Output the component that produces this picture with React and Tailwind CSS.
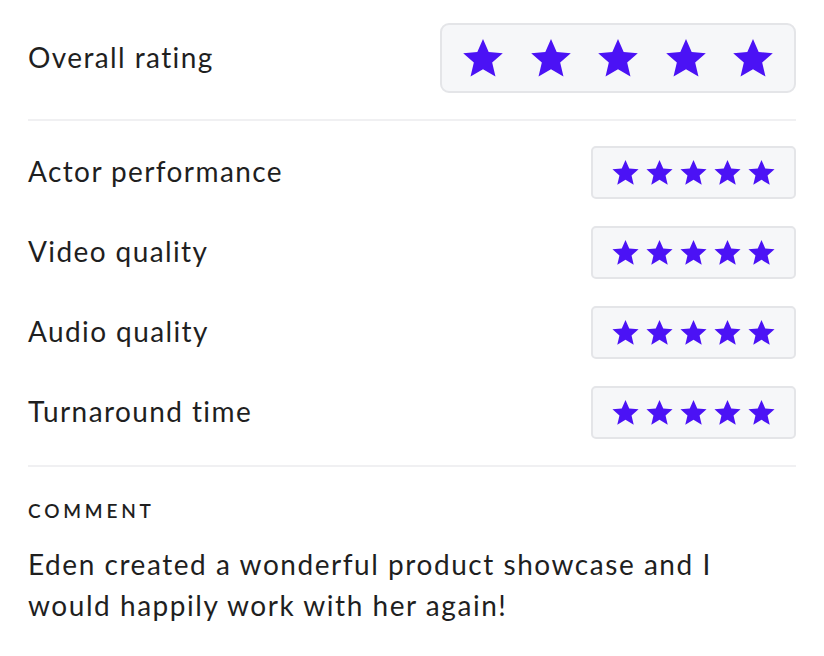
import React from "react";

const STAR = "M12 1.6l3.1 7.1 7.7.7-5.8 5.1 1.8 7.6L12 18.1l-6.8 4 1.8-7.6L1.2 9.4l7.7-.7z";

function Star({ size }) {
  return (
    <svg width={size} height={size} viewBox="0 0 24 24" className="shrink-0">
      <path d={STAR} fill="#4b12f5" />
    </svg>
  );
}

function Stars({ big }) {
  if (big) {
    return (
      <div className="flex h-[70px] w-[356px] items-center justify-between rounded-[9px] border-2 border-[#e4e5e8] bg-[#f6f7f9] px-[19px]">
        {[0, 1, 2, 3, 4].map((i) => (
          <Star key={i} size={44} />
        ))}
      </div>
    );
  }
  return (
    <div className="flex h-[53px] w-[205px] items-center justify-center gap-[5px] rounded-[5px] border-2 border-[#e4e5e8] bg-[#f6f7f9]">
      {[0, 1, 2, 3, 4].map((i) => (
        <Star key={i} size={29} />
      ))}
    </div>
  );
}

const categories = ["Actor performance", "Video quality", "Audio quality", "Turnaround time"];

export default function App() {
  return (
    <div
      className="min-h-screen bg-white px-[28px] pt-[23px] text-[#1f1f1f]"
      style={{ fontFamily: "Lato, 'Liberation Sans', sans-serif" }}
    >
      <div className="flex items-center justify-between">
        <span className="-mt-[2px] text-[28px] tracking-[0.05em]">Overall rating</span>
        <Stars big />
      </div>
      <div className="mt-[26px] h-[2px] bg-[#f0f0f2]" />
      <div className="flex flex-col gap-[27px] pt-[25px]">
        {categories.map((c) => (
          <div key={c} className="flex items-center justify-between">
            <span className="-mt-[3px] text-[28px] tracking-[0.05em]">{c}</span>
            <Stars />
          </div>
        ))}
      </div>
      <div className="mt-[26px] h-[2px] bg-[#f0f0f2]" />
      <div className="pt-[34px] text-[19px] font-semibold uppercase leading-none tracking-[0.2em]">
        Comment
      </div>
      <p className="mt-[24px] max-w-[710px] text-[28px] leading-[41px] tracking-[0.055em]">
        Eden created a wonderful product showcase and I would happily work with her again!
      </p>
    </div>
  );
}
